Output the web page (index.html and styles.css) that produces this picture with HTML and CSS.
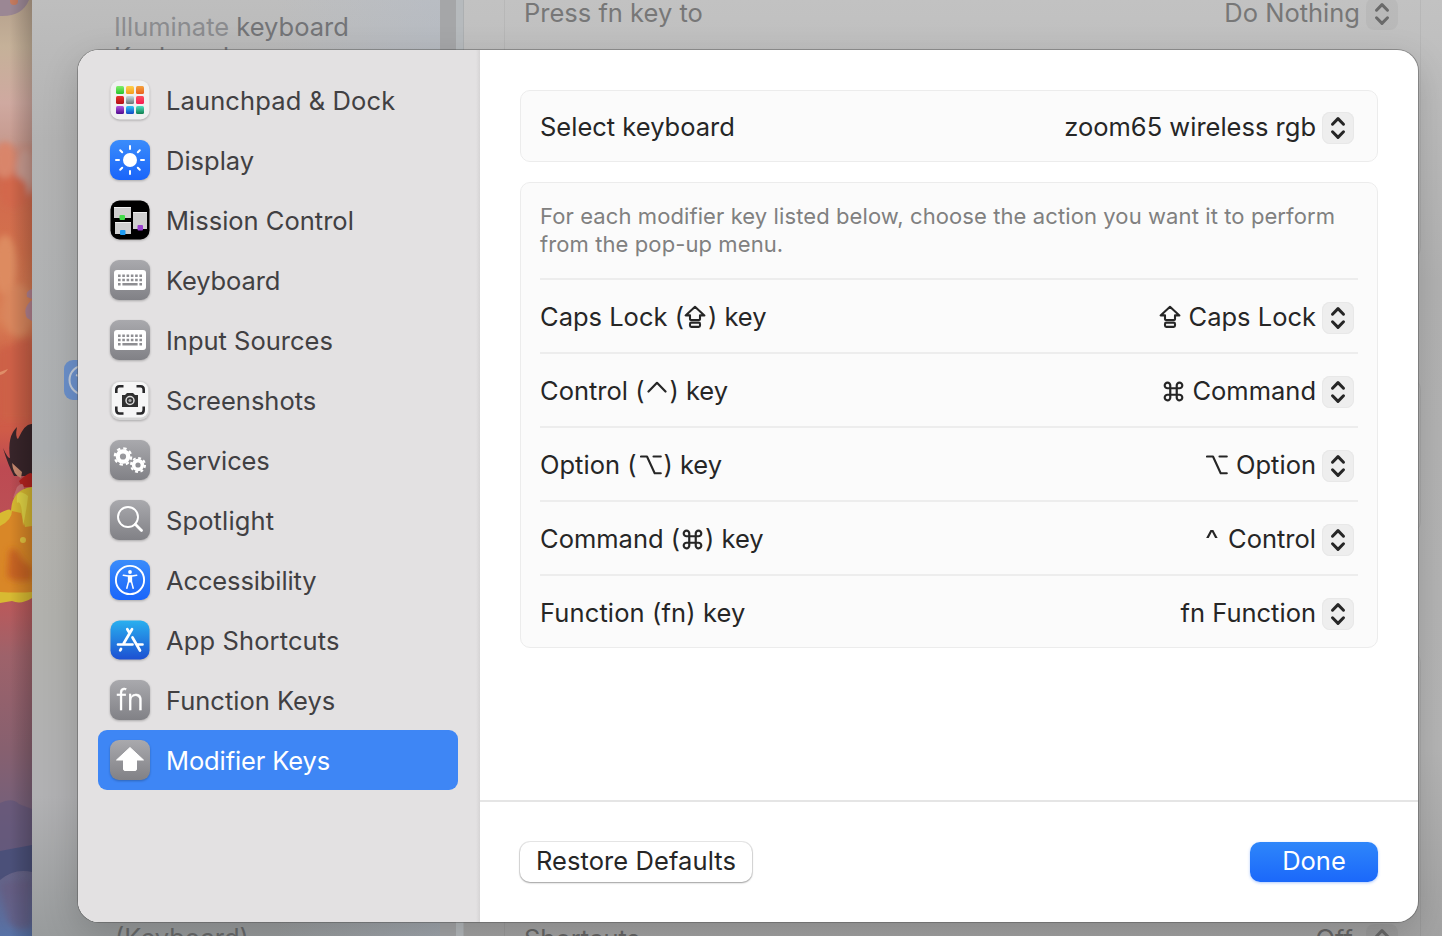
FILE: index.html
```html
<!DOCTYPE html>
<html lang="en">
<head>
<meta charset="utf-8">
<title>Keyboard Shortcuts</title>
<link rel="stylesheet" href="styles.css">
</head>
<body>
<svg width="0" height="0" class="defs" aria-hidden="true">
  <defs>
    <linearGradient id="blue" x2="0" y2="1"><stop stop-color="#3a8cfb"/><stop offset="1" stop-color="#1a65fa"/></linearGradient>
    <linearGradient id="gray" x2="0" y2="1"><stop stop-color="#a9a9ad"/><stop offset="1" stop-color="#818186"/></linearGradient>
    <linearGradient id="store" x2="0" y2="1"><stop stop-color="#29b0ef"/><stop offset="1" stop-color="#1d50d2"/></linearGradient>
    <linearGradient id="white" x2="0" y2="1"><stop stop-color="#f0f1f1"/><stop offset="1" stop-color="#f1f1f1"/></linearGradient>
    <linearGradient id="g1" x2="0" y2="1"><stop stop-color="#82ef6a"/><stop offset="1" stop-color="#27c32e"/></linearGradient>
    <linearGradient id="g2" x2="0" y2="1"><stop stop-color="#fdd14c"/><stop offset="1" stop-color="#f49d1d"/></linearGradient>
    <linearGradient id="g3" x2="0" y2="1"><stop stop-color="#f5a23c"/><stop offset="1" stop-color="#e8621e"/></linearGradient>
    <linearGradient id="g4" x2="0" y2="1"><stop stop-color="#e8322e"/><stop offset="1" stop-color="#b30f14"/></linearGradient>
    <linearGradient id="g5" x2="0" y2="1"><stop stop-color="#c6dbe0"/><stop offset="1" stop-color="#6b7375"/></linearGradient>
    <linearGradient id="g6" x2="0" y2="1"><stop stop-color="#fb4f5d"/><stop offset="1" stop-color="#f71c54"/></linearGradient>
    <linearGradient id="g7" x2="0" y2="1"><stop stop-color="#b456e0"/><stop offset="1" stop-color="#500b8f"/></linearGradient>
    <linearGradient id="g8" x2="0" y2="1"><stop stop-color="#2cc9f7"/><stop offset="1" stop-color="#1446c4"/></linearGradient>
    <linearGradient id="g9" x2="0" y2="1"><stop stop-color="#4fe0c0"/><stop offset="1" stop-color="#12804f"/></linearGradient>
    <symbol id="updown" viewBox="0 0 32 32"><path d="M10.500 12.200 16 6.600 21.500 12.200M10.500 19.800 16 25.400 21.500 19.800" fill="none" stroke="currentColor" stroke-width="3" stroke-linecap="round" stroke-linejoin="round"/></symbol>
    <symbol id="caps" viewBox="0 0 22 24"><path d="M11 1.800 1.600 10.400H6V14.300Q6 15 6.700 15H15.300Q16 15 16 14.300V10.400H20.400Z" fill="none" stroke="currentColor" stroke-width="2.100" stroke-linejoin="round"/><rect x="6" y="17.600" width="10" height="4.300" rx="1.300" fill="none" stroke="currentColor" stroke-width="2.100"/></symbol>
    <symbol id="cmd" viewBox="0 0 22 22"><path d="M7.600 7.600H14.400V14.400H7.600ZM7.600 7.600H4.800A2.900 2.900 0 1 1 7.600 4.800ZM14.400 7.600V4.800A2.900 2.900 0 1 1 17.200 7.600ZM14.400 14.400H17.200A2.900 2.900 0 1 1 14.400 17.200ZM7.600 14.400V17.200A2.900 2.900 0 1 1 4.800 14.400Z" fill="none" stroke="currentColor" stroke-width="2.300"/></symbol>
    <symbol id="opt" viewBox="0 0 22 20"><path d="M1 1.500H7L14.700 18.300H20.800M13.500 1.500H20.800" fill="none" stroke="currentColor" stroke-width="2.100" stroke-linecap="round" stroke-linejoin="round"/></symbol>
    <symbol id="ctrl" viewBox="0 0 20 12"><path d="M1.500 10.500 10 1.800 18.500 10.500" fill="none" stroke="currentColor" stroke-width="2.200" stroke-linecap="round" stroke-linejoin="round"/></symbol>
    <symbol id="kbd" viewBox="0 0 40 40"><rect width="40" height="40" rx="9" fill="url(#gray)"/><rect x="4" y="10" width="32" height="20" rx="3" fill="#fff"/><path d="M8 15.700H32M8 20H32" stroke="#8e8e92" stroke-width="2.500" stroke-dasharray="2.600 1.680"/><path d="M8 24.300H10.600M12.400 24.300H27.600M29.400 24.300H32" stroke="#8e8e92" stroke-width="2.400"/></symbol>
    <filter id="soft" x="-50%" y="-20%" width="200%" height="140%"><feGaussianBlur stdDeviation="3"/></filter>
  </defs>
</svg>

<div class="desktop">
  <svg class="wallpaper" viewBox="0 0 32 936" width="32" height="936">
    <defs>
      <linearGradient id="sky" x2="0" y2="1">
        <stop stop-color="#b5a08c"/><stop offset=".05" stop-color="#c5b199"/><stop offset=".11" stop-color="#cfa9a0"/><stop offset=".15" stop-color="#c79b90"/><stop offset=".19" stop-color="#d0694e"/><stop offset=".27" stop-color="#d4714c"/><stop offset=".34" stop-color="#d98056"/><stop offset=".38" stop-color="#ce6347"/><stop offset=".46" stop-color="#cf5b48"/><stop offset=".5" stop-color="#bd4a52"/><stop offset=".65" stop-color="#b85a5c"/><stop offset=".7" stop-color="#9e626a"/><stop offset=".8" stop-color="#87606f"/><stop offset=".88" stop-color="#72607c"/><stop offset=".92" stop-color="#675f80"/><stop offset="1" stop-color="#5872a6"/>
      </linearGradient>
      <linearGradient id="edge"><stop offset=".3" stop-opacity="0"/><stop offset="1" stop-opacity=".2"/></linearGradient>
    </defs>
    <rect width="32" height="936" fill="url(#sky)"/>
    <path d="M0 0H29Q22 17 0 16Z" fill="#9b8794"/><circle cx="14" cy="1" r="4" fill="#c57b5f"/>
    <g filter="url(#soft)"><ellipse cx="5" cy="160" rx="11" ry="18" fill="#d9856a"/><ellipse cx="26" cy="172" rx="10" ry="24" fill="#cb9d92"/><ellipse cx="14" cy="192" rx="14" ry="16" fill="#d3674b"/><ellipse cx="5" cy="265" rx="12" ry="30" fill="#dd8b61"/><ellipse cx="18" cy="310" rx="16" ry="26" fill="#d9865d"/><path d="M0 350 32 337V420H0Z" fill="#cd6146"/></g>
    <path d="M32 289Q25 291 27 297L32 299ZM32 300Q22 308 27 318L32 321Z" fill="#b58391"/>
    <path d="M0 372 8 369Q5 374 0 375Z" fill="#df8e68"/>
    <path d="M3 448Q8 459 10 458 7 436 17 427 15 437 18 439 25 423 32 424V476H14Q8 465 3 448Z" fill="#38252a"/>
    <path d="M12 463Q13 475 21 478L22 472Z" fill="#c88a70"/>
    <path d="M19 481Q31 470 32 474V487H22Z" fill="#b6231f"/>
    <path d="M17 487Q24 480 24 490L13 498Z" fill="#c96e71"/>
    <path d="M0 513Q11 507 11 511 12 489 32 487V598Q21 605 12 601L0 603Z" fill="#d8ba32"/>
    <path d="M0 526Q12 520 12 511L21 513 25 527 32 526V592Q18 593 0 592Z" fill="#d98727"/>
    <path d="M9 551Q14 543 22 559L32 568V580Q10 584 7 575Z" fill="#c86323" filter="url(#soft)"/>
    <path d="M17 503Q22 498 23 526 27 508 28 496 15 486 17 503Z" fill="#e2d445"/><circle cx="23" cy="540" r="3" fill="#e2c240"/>
    <path d="M0 803Q12 797 19 804L32 809V857L0 862Z" fill="#62577a" opacity=".7"/>
    <path d="M0 851 32 845V872Q14 868 0 880Z" fill="#4b5079"/>
    <path d="M0 885Q13 878 32 880V926Q19 934 8 922Z" fill="#66597b" opacity=".6" filter="url(#soft)"/>
    <rect width="32" height="936" fill="url(#edge)"/>
  </svg>
  <div class="window">
    <div class="back-side">
      <p class="back-item"><span class="dim">Illuminate</span> keyboard<br>Keyboard</p>
      <svg class="back-access" width="40" height="40" viewBox="0 0 40 40"><rect width="40" height="40" rx="9" fill="#6b90cb"/><circle cx="20" cy="20" r="14.500" fill="none" stroke="#c2cbd8" stroke-width="2"/><path d="M12 15 18 17" stroke="#c2cbd8" stroke-width="2"/></svg>
      <p class="back-item back-end">(Keyboard)</p>
    </div>
    <div class="back-track"></div>
    <div class="back-main">
      <div class="back-card back-top"><span>Press fn key to</span><span class="back-value">Do Nothing</span><svg class="pop"><use href="#updown"/></svg></div>
      <div class="back-card back-mid"></div>
      <div class="back-card back-bottom"><span>Shortcuts</span><span class="back-value off">Off</span><svg class="pop"><use href="#updown"/></svg></div>
    </div>
  </div>
</div>

<div class="sheet">
  <nav class="sidebar">
    <a class="item"><svg viewBox="0 0 40 40"><rect x=".5" y=".5" width="39" height="39" rx="9" fill="url(#white)"/><g><rect x="6" y="6" width="8" height="8" rx="1.500" fill="url(#g1)"/><rect x="16" y="6" width="8" height="8" rx="1.500" fill="url(#g2)"/><rect x="26" y="6" width="8" height="8" rx="1.500" fill="url(#g3)"/><rect x="6" y="16" width="8" height="8" rx="1.500" fill="url(#g4)"/><rect x="16" y="16" width="8" height="8" rx="1.500" fill="url(#g5)"/><rect x="26" y="16" width="8" height="8" rx="1.500" fill="url(#g6)"/><rect x="6" y="26" width="8" height="8" rx="1.500" fill="url(#g7)"/><rect x="16" y="26" width="8" height="8" rx="1.500" fill="url(#g8)"/><rect x="26" y="26" width="8" height="8" rx="1.500" fill="url(#g9)"/></g></svg><span class="wide">Launchpad &amp; Dock</span></a>
    <a class="item"><svg viewBox="0 0 40 40"><rect width="40" height="40" rx="9" fill="url(#blue)"/><circle cx="20" cy="20" r="7" fill="#fff"/><path d="M20 6V9M20 31V34M6 20H9M31 20H34M10.200 10.200 12.200 12.200M27.800 27.800 29.800 29.800M10.200 29.800 12.200 27.800M27.800 12.200 29.800 10.200" stroke="#fff" stroke-width="2" stroke-linecap="round"/></svg><span>Display</span></a>
    <a class="item"><svg viewBox="0 0 40 40"><rect x=".5" y=".5" width="39" height="39" rx="9"/><path d="M4 7H21V18H4ZM5 22H21V34H5ZM23 12H37V29H23Z" fill="#cfcfcf"/><path d="M4 7.500H21M5 22.500H21M23 12.500H37" stroke="#eee"/><rect x="9.500" y="15" width="5.500" height="5" rx="1" fill="#43dc4b"/><rect x="10" y="30" width="5.500" height="5" rx="1" fill="#1f9df4"/><rect x="27.500" y="25" width="5.500" height="5.500" rx="1" fill="#9a42d0"/></svg><span>Mission Control</span></a>
    <a class="item"><svg><use href="#kbd"/></svg><span class="tight">Keyboard</span></a>
    <a class="item"><svg><use href="#kbd"/></svg><span>Input Sources</span></a>
    <a class="item"><svg viewBox="0 0 40 40"><rect x=".5" y="1" width="39" height="39" rx="9" fill="#d5d5d5"/><rect x="2" y="2" width="36" height="35.500" rx="7.500" fill="#f6f6f6"/><path d="M6.300 13V9.500Q6.300 6.300 9.500 6.300H13.500M26.500 6.300H30.500Q33.700 6.300 33.700 9.500V13M33.700 26.500V30Q33.700 33.500 30.500 33.500H26.500M13.500 33.500H9.500Q6.300 33.500 6.300 30V26.500" fill="none" stroke="#28282a" stroke-width="2.600"/><path d="M12 15H15L17 13H23L25 15H28V27H12Z" fill="#303030"/><circle cx="20" cy="20.500" r="4" fill="#333" stroke="#ddd" stroke-width="1.500"/><circle cx="20" cy="20.500" r="1.600" fill="#aaa"/></svg><span>Screenshots</span></a>
    <a class="item"><svg viewBox="0 0 40 40"><rect width="40" height="40" rx="9" fill="url(#gray)"/><circle cx="13" cy="16.500" r="5.200" fill="none" stroke="#fff" stroke-width="4.200"/><circle cx="13" cy="16.500" r="8.200" fill="none" stroke="#fff" stroke-width="2.200" stroke-dasharray="3.400 3.040"/><circle cx="28" cy="25" r="4.400" fill="none" stroke="#fff" stroke-width="3.600"/><circle cx="28" cy="25" r="7" fill="none" stroke="#fff" stroke-width="2" stroke-dasharray="2.900 2.598"/></svg><span class="tight">Services</span></a>
    <a class="item"><svg viewBox="0 0 40 40"><rect width="40" height="40" rx="9" fill="url(#gray)"/><circle cx="18" cy="17" r="10" fill="none" stroke="#fff" stroke-width="1.900"/><path d="M25.300 24.300 31.500 30.500" stroke="#fff" stroke-width="2.800" stroke-linecap="round"/></svg><span class="wide">Spotlight</span></a>
    <a class="item"><svg viewBox="0 0 40 40"><rect width="40" height="40" rx="9" fill="url(#blue)"/><circle cx="20" cy="20" r="14.100" fill="none" stroke="#fff" stroke-width="1.900"/><circle cx="20" cy="12" r="1.900" fill="#fff"/><path d="M13.300 15.300 18 16.100H22L26.700 15.300M18.600 17V21.500L16.800 28.300M21.400 17V21.500L23.200 28.300" fill="none" stroke="#fff" stroke-width="1.500" stroke-linecap="round"/><path d="M18 15.500H22V22.500H18Z" fill="#fff"/></svg><span class="tight">Accessibility</span></a>
    <a class="item"><svg viewBox="0 0 40 40"><rect x=".5" y=".5" width="39" height="39" rx="9" fill="url(#store)"/><path d="M22 9.200 13.800 23.300M17.300 9.200 19 12M22.500 17.500 30 30.500M8 24.500H22.500M28 24.500H32.500M11 29 10.200 30.400" stroke="#fff" stroke-width="2.700" stroke-linecap="round"/></svg><span class="wide">App Shortcuts</span></a>
    <a class="item"><svg viewBox="0 0 40 40"><rect width="40" height="40" rx="9" fill="url(#gray)"/><text class="fn" x="20.300" y="30" text-anchor="middle">fn</text></svg><span>Function Keys</span></a>
    <a class="item selected"><svg viewBox="0 0 40 40"><rect width="40" height="40" rx="9" fill="url(#gray)"/><path d="M20 7.500 33.500 20H26.500V29Q26.500 30.500 25 30.500H15Q13.500 30.500 13.500 29V20H6.500Z" fill="#fff" stroke="#fff" stroke-width="1" stroke-linejoin="round"/></svg><span class="tight">Modifier Keys</span></a>
  </nav>
  <main class="main">
    <div class="content">
      <section class="card select"><span class="label">Select keyboard</span><span class="value"><span>zoom65 wireless rgb</span><svg class="pop"><use href="#updown"/></svg></span></section>
      <section class="card">
        <p class="hint">For each modifier key listed below, choose the action you want it to perform<br>from the pop-up menu.</p>
        <div class="row"><span class="label">Caps Lock (<svg class="k-caps"><use href="#caps"/></svg>) key</span><span class="value"><svg class="k-caps"><use href="#caps"/></svg><span>Caps Lock</span><svg class="pop"><use href="#updown"/></svg></span></div>
        <div class="row"><span class="label">Control (<svg class="k-ctrl"><use href="#ctrl"/></svg>) key</span><span class="value"><svg class="k-cmd"><use href="#cmd"/></svg><span>Command</span><svg class="pop"><use href="#updown"/></svg></span></div>
        <div class="row"><span class="label">Option (<svg class="k-opt"><use href="#opt"/></svg>) key</span><span class="value"><svg class="k-opt"><use href="#opt"/></svg><span>Option</span><svg class="pop"><use href="#updown"/></svg></span></div>
        <div class="row"><span class="label">Command (<svg class="k-cmd"><use href="#cmd"/></svg>) key</span><span class="value"><span><span class="caret">^</span> Control</span><svg class="pop"><use href="#updown"/></svg></span></div>
        <div class="row"><span class="label wide">Function (fn) key</span><span class="value"><span>fn Function</span><svg class="pop"><use href="#updown"/></svg></span></div>
      </section>
    </div>
    <footer class="footer"><button class="restore">Restore Defaults</button><button class="done">Done</button></footer>
  </main>
</div>
</body>
</html>
```
FILE: styles.css
```css
* { box-sizing: border-box; }
body { margin: 0; width: 1442px; height: 936px; overflow: hidden; position: relative; font: 25.5px/30px Inter, "Liberation Sans", sans-serif; color: #262626; background: #b4b4b4; }
p { margin: 0; }
span { white-space: pre; }
.defs { position: absolute; }
.wide { letter-spacing: .12px; }
.tight { letter-spacing: -.12px; }

.desktop { display: flex; height: 936px; }
.wallpaper { display: block; flex: none; }
.window { position: relative; display: flex; flex: 1; height: 936px; overflow: hidden; background: linear-gradient(#c2c2c2, #b2b2b2 30%, #b5b5b5 80%, #a3a3a3); box-shadow: inset 1px 0 #a19f9d; color: #777; }
.back-side { position: relative; width: 408px; padding: 12px 0 0 82px; background: linear-gradient(90deg, transparent 60%, rgba(175, 187, 205, .35)), linear-gradient(#bebebe, #b3b3b3 15%, #adb0b2 48%, #b3b2ae 55%, #b1b1ad 66%, #b1b1b3 85%, #989b9c 100%); }
.back-item { white-space: nowrap; color: #737477; }
.back-item .dim { color: #8b8c8f; }
.back-end { position: absolute; left: 83px; top: 923px; color: #686a6b; }
.back-access { position: absolute; left: 32px; top: 360px; }
.back-track { width: 24px; background: linear-gradient(90deg, #a5a6a8 16px, #b6babd 16px, #b6babd 23px, #acafb1 23px); }
.back-main { flex: 1; padding-left: 40px; }
.back-card { position: relative; display: flex; width: 917px; border: 1px solid rgba(0, 0, 0, .05); padding: 0 22px 0 19px; border-radius: 10px; }
.back-top { height: 260px; margin-top: -2px; border-top: 0; border-radius: 0 0 10px 10px; }
.back-mid { margin-top: 121px; height: 153px; }
.back-bottom { margin-top: 120px; height: 600px; padding-top: 271px; color: #666; }
.back-card .pop { margin-left: 6px; color: #6a6a6a; background: rgba(0, 0, 0, .04); box-shadow: none; }
.back-value { margin-left: auto; }
.off { margin-right: 7px; }

.sheet { position: absolute; left: 78px; top: 50px; width: 1340px; height: 872px; display: flex; border-radius: 21px; overflow: hidden; background: #fff; }
.desktop::after { content: ""; position: absolute; left: 78px; top: 50px; width: 1340px; height: 872px; border-radius: 21px; box-shadow: 0 0 0 1px rgba(80, 80, 80, .45), 0 12px 36px rgba(0, 0, 0, .18); }
.sidebar { width: 402px; flex: none; padding: 20px; background: linear-gradient(90deg, #e3e1e2 398px, #d6d4d5); color: #414042; }
.item { display: flex; align-items: center; gap: 16px; width: 360px; height: 60px; padding-left: 12px; border-radius: 9px; }
.item span { position: relative; top: 1px; }
.item svg { width: 40px; height: 40px; overflow: visible; filter: drop-shadow(0 1px 1px rgba(0, 0, 0, .25)); }
.item.selected { background: #3e86f5; color: #fff; }
.fn { font: 300 29px Inter, sans-serif; fill: #fff; stroke: #fff; stroke-width: .3px; }

.main { flex: 1; display: flex; flex-direction: column; }
.content { height: 750px; padding: 40px 40px 0; display: flex; flex-direction: column; gap: 20px; }
.card { border: 1px solid #ececec; border-radius: 10px; background: #fbfbfb; padding: 0 19px; }
.select { height: 72px; display: flex; align-items: center; justify-content: space-between; padding-top: 2px; }
.hint { height: 95px; padding-top: 19px; font-size: 22px; line-height: 28px; letter-spacing: .095px; white-space: nowrap; color: #808080; }
.row { height: 74px; padding-top: 2px; border-top: 2px solid #ededed; display: flex; align-items: center; justify-content: space-between; }
.row:last-child { height: 73px; padding-top: 3px; }
.label { display: flex; align-items: center; }
.value { display: flex; align-items: center; padding-right: 4px; }
.value .pop { margin-left: 6px; position: relative; top: 1px; }
.pop { width: 32px; height: 32px; flex: none; border-radius: 8px; background: #eee; box-shadow: inset 0 0 0 1px #e8e8e8; }
.k-caps { width: 22px; height: 24px; }
.k-cmd { width: 21px; height: 21px; }
.k-opt { width: 22px; height: 20px; }
.k-ctrl { width: 20px; height: 12px; position: relative; top: -4px; }
.label .k-caps { margin-right: 2px; }
.label .k-ctrl { margin: 0 2px 0 3px; }
.label .k-opt { margin: 0 1px 0 4px; }
.label .k-cmd { margin: 0 2px; }
.value > svg:first-child { margin-right: 8px; }
.caret { display: inline-block; transform: scaleX(1.15); margin-right: 3px; }

.footer { flex: 1; border-top: 2px solid #e5e5e5; padding: 40px 40px 0; display: flex; justify-content: space-between; align-items: flex-start; }
button { height: 40px; border: 0; padding: 0 0 2px; border-radius: 10px; font: inherit; color: inherit; white-space: nowrap; }
.restore { width: 232px; letter-spacing: .08px; background: #fff; box-shadow: 0 0 0 1px rgba(0, 0, 0, .09), 0 1px 2px rgba(0, 0, 0, .32); }
.done { width: 128px; color: #fff; background: linear-gradient(#2e86fa, #1b68fa); box-shadow: 0 1px 3px rgba(27, 104, 250, .35); }
```
